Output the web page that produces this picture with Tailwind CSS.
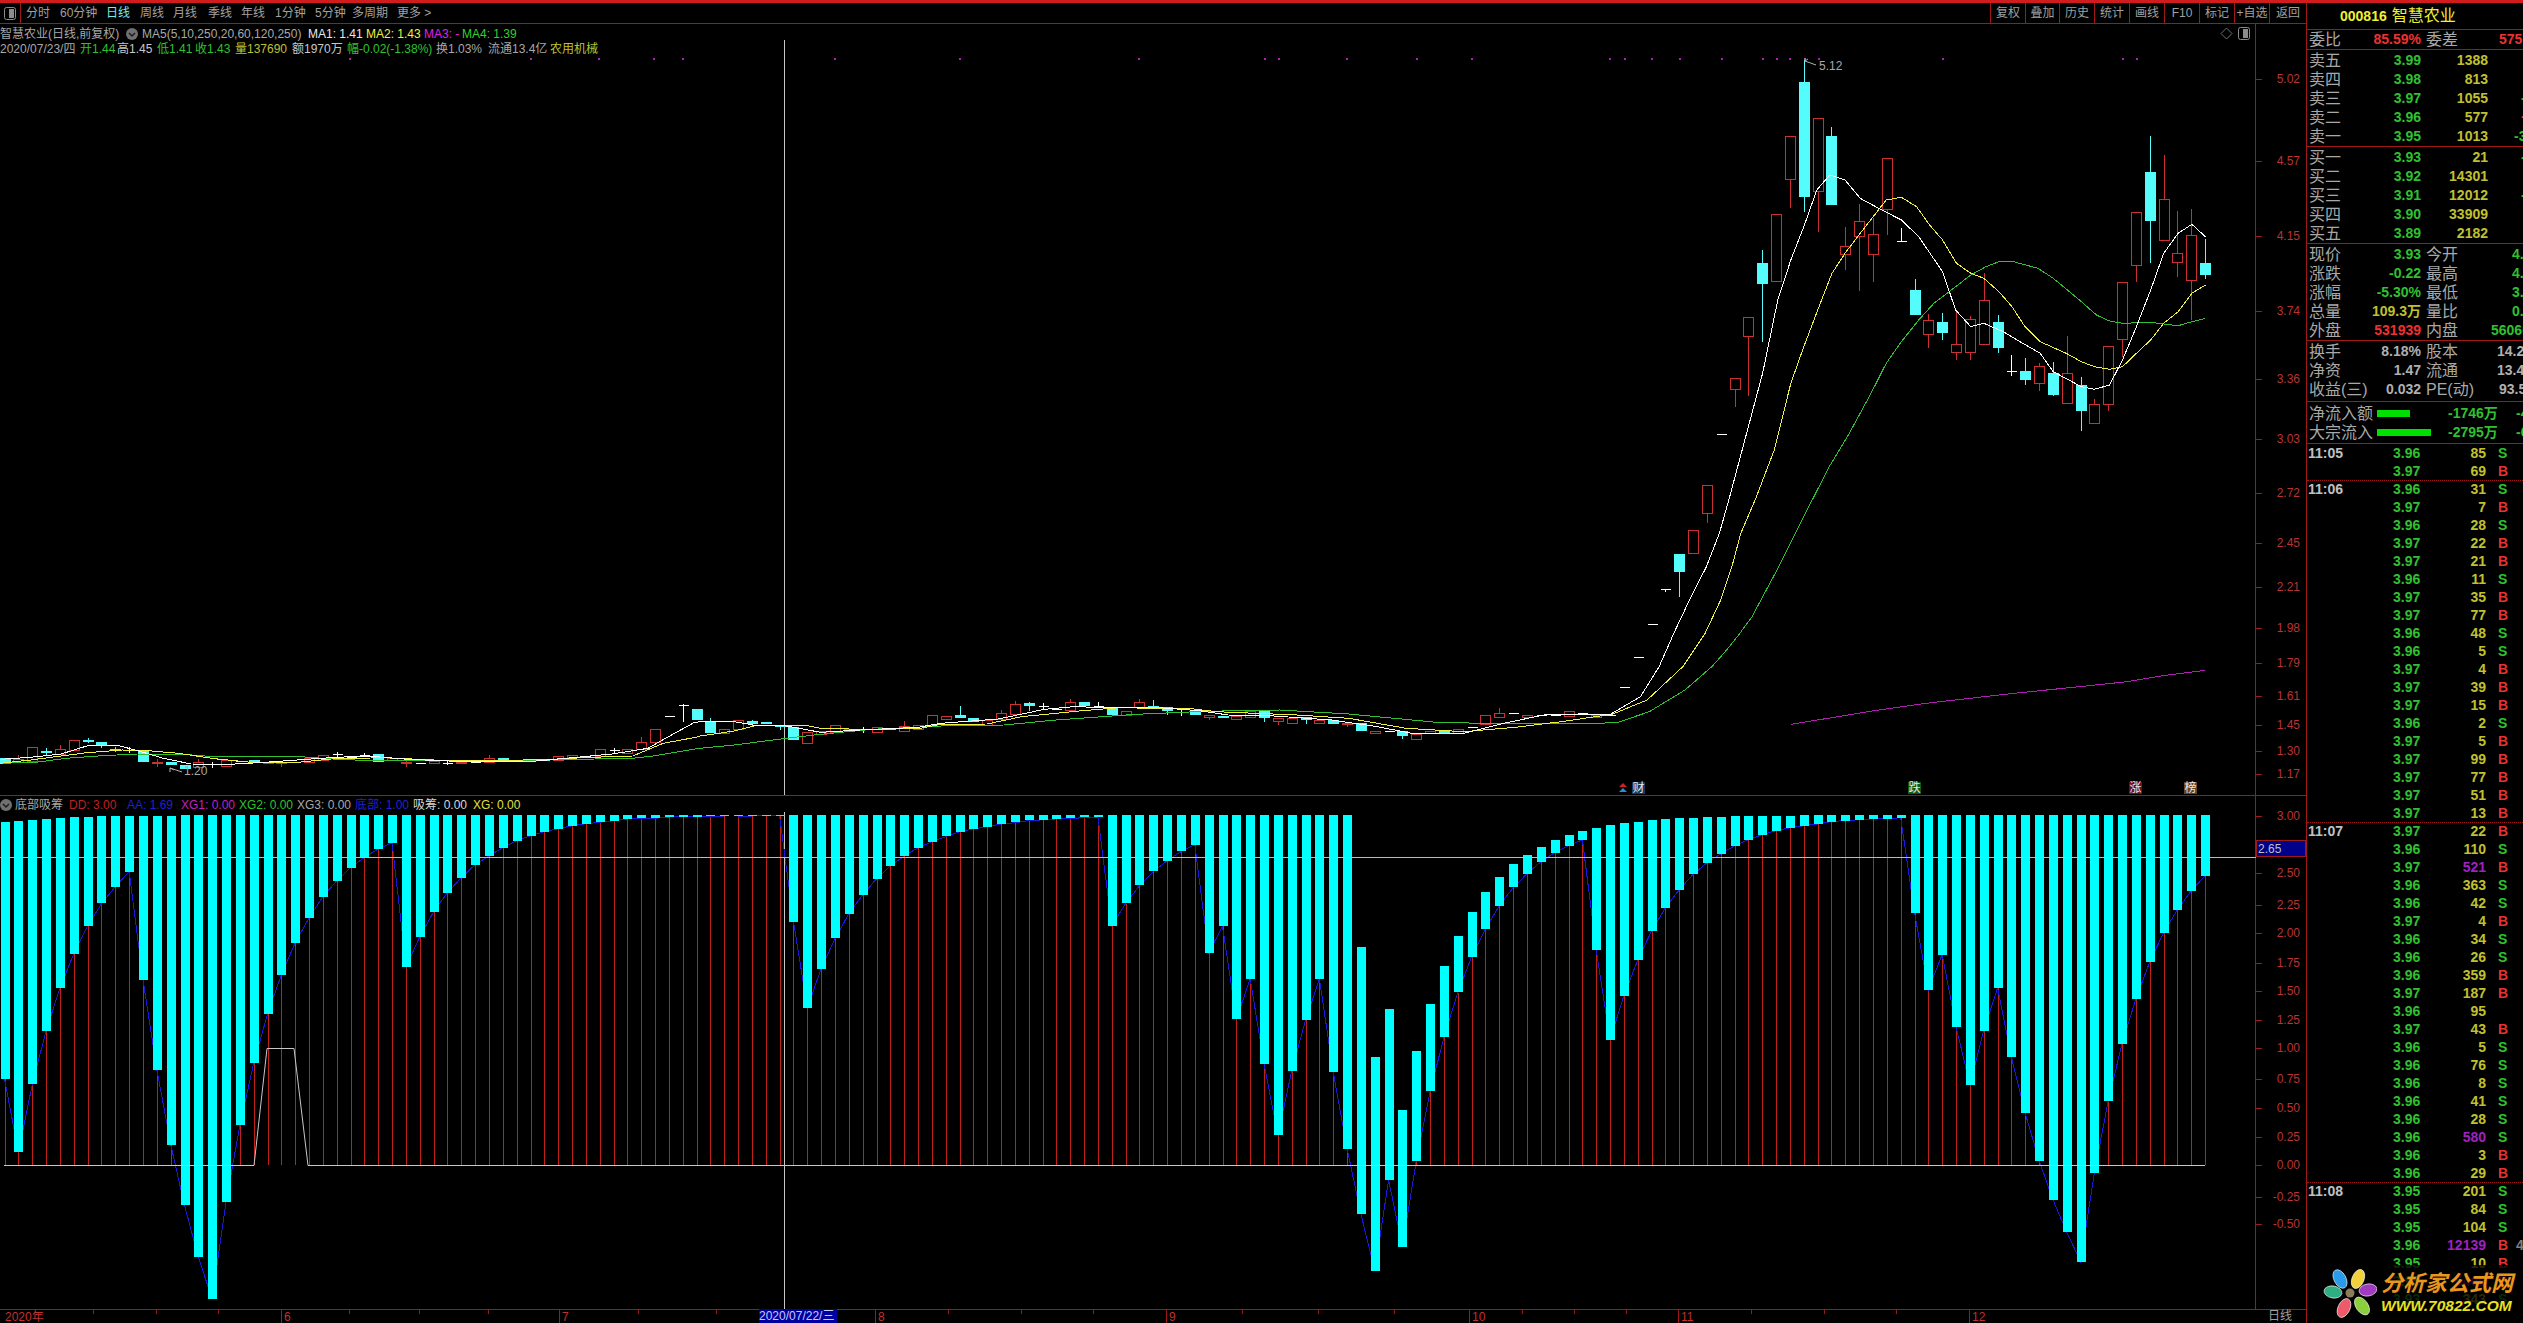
<!DOCTYPE html>
<html lang="zh">
<head>
<meta charset="UTF-8">
<title>000816 智慧农业</title>
<script src="https://cdn.jsdelivr.net/npm/@tailwindcss/browser@4"></script>
</head>
<body class="bg-black">
<div class="w-[2523px] h-[1323px] flex flex-col overflow-hidden bg-black text-[12px] font-['Liberation_Sans','Noto_Sans_CJK_SC',sans-serif] text-[#a8a8a8]">
  <div class="h-[3px] bg-[#d01c1c]"></div>
  <div class="flex-1 flex min-h-0">

    <!-- left: toolbar + charts -->
    <div class="w-[2306px] flex flex-col">
      <div class="h-[21px] flex items-center border-b border-[#a01818] text-[#a0a0a0]">
        <div class="w-[21px] h-full flex items-center justify-center border-r border-[#a01818]">
          <svg width="12" height="13" viewBox="0 0 12 13"><rect x="0.5" y="0.5" width="11" height="12" rx="2" fill="none" stroke="#8c8c8c"/><rect x="5" y="2" width="5" height="9" fill="#8c8c8c"/></svg>
        </div>
        <span class="w-[5px]"></span>
        <span class="w-[34px]">分时</span>
        <span class="w-[46px]">60分钟</span>
        <span class="w-[34px] text-[#7fe8e8]">日线</span>
        <span class="w-[33px]">周线</span>
        <span class="w-[35px]">月线</span>
        <span class="w-[33px]">季线</span>
        <span class="w-[34px]">年线</span>
        <span class="w-[40px]">1分钟</span>
        <span class="w-[37px]">5分钟</span>
        <span class="w-[45px]">多周期</span>
        <span class="w-[40px]">更多 &gt;</span>
        <div class="ml-auto flex h-full">
          <span class="w-[35px] flex items-center justify-center border-l border-[#a01818]">复权</span>
          <span class="w-[34px] flex items-center justify-center border-l border-[#a01818]">叠加</span>
          <span class="w-[35px] flex items-center justify-center border-l border-[#a01818]">历史</span>
          <span class="w-[35px] flex items-center justify-center border-l border-[#a01818]">统计</span>
          <span class="w-[35px] flex items-center justify-center border-l border-[#a01818]">画线</span>
          <span class="w-[35px] flex items-center justify-center border-l border-[#a01818]">F10</span>
          <span class="w-[35px] flex items-center justify-center border-l border-[#a01818]">标记</span>
          <span class="w-[35px] flex items-center justify-center border-l border-[#a01818]">+自选</span>
          <span class="w-[37px] flex items-center justify-center border-l border-[#a01818]">返回</span>
        </div>
      </div>

      <div class="relative flex-1">
        <svg id="chart" class="block" width="2306" height="1299" viewBox="0 24 2306 1299"></svg>

        <!-- main chart caption -->
        <div class="absolute left-0 top-[2px] whitespace-nowrap">
          <div class="flex items-center h-[15px]">
            <span class="w-[125px]">智慧农业(日线,前复权)</span>
            <span class="w-[17px]"><svg width="12" height="12" viewBox="0 0 12 12" class="ml-[1px]"><circle cx="6" cy="6" r="6" fill="#707070"/><path d="M3 5l3 3 3-3" fill="none" stroke="#1c1c1c" stroke-width="1.5"/></svg></span>
            <span class="w-[166px]">MA5(5,10,250,20,60,120,250)</span>
            <span class="w-[58px] text-[#e8e8e8]">MA1: 1.41</span>
            <span class="w-[58px] text-[#f0f040]">MA2: 1.43</span>
            <span class="w-[38px] text-[#e020e0]">MA3: -</span>
            <span class="text-[#30d030]">MA4: 1.39</span>
          </div>
          <div class="flex items-center h-[15px]">
            <span class="w-[80px]">2020/07/23/四</span>
            <span class="w-[37px] text-[#30c030]">开1.44</span>
            <span class="w-[40px] text-[#c8c8c8]">高1.45</span>
            <span class="w-[38px] text-[#30c030]">低1.41</span>
            <span class="w-[40px] text-[#30c030]">收1.43</span>
            <span class="w-[57px] text-[#c0c030]">量137690</span>
            <span class="w-[55px] text-[#c8c8c8]">额1970万</span>
            <span class="w-[89px] text-[#30c030]">幅-0.02(-1.38%)</span>
            <span class="w-[52px]">换1.03%</span>
            <span class="w-[62px]">流通13.4亿</span>
            <span class="text-[#c0c030]">农用机械</span>
          </div>
        </div>

        <!-- top right chart buttons -->
        <div class="absolute left-[2220px] top-[3px] flex items-center gap-[5px]">
          <svg width="13" height="13" viewBox="0 0 13 13"><path d="M6.5 1L12 6.5 6.5 12 1 6.5z" fill="none" stroke="#707070"/></svg>
          <svg width="12" height="13" viewBox="0 0 12 13"><rect x="0.5" y="0.5" width="11" height="12" rx="2" fill="none" stroke="#8c8c8c"/><rect x="5" y="2" width="5" height="9" fill="#8c8c8c"/></svg>
        </div>

        <!-- signal badges -->
        <div class="absolute left-[1632px] top-[758px] w-[13px] h-[12px] flex items-center justify-center bg-[#123a66] text-[#e8e8e8] text-[12px] leading-none">财</div>
        <div class="absolute left-[1908px] top-[758px] w-[13px] h-[12px] flex items-center justify-center bg-[#0e5a12] text-[#e8e8e8] text-[12px] leading-none">跌</div>
        <div class="absolute left-[2129px] top-[758px] w-[13px] h-[12px] flex items-center justify-center bg-[#6a0f14] text-[#e8e8e8] text-[12px] leading-none">涨</div>
        <div class="absolute left-[2184px] top-[758px] w-[13px] h-[12px] flex items-center justify-center bg-[#6a4218] text-[#e8e8e8] text-[12px] leading-none">榜</div>

        <!-- indicator caption -->
        <div class="absolute left-0 top-[772px] h-[17px] flex items-center whitespace-nowrap">
          <span class="w-[15px]"><svg width="12" height="12" viewBox="0 0 12 12"><circle cx="6" cy="6" r="6" fill="#707070"/><path d="M3 5l3 3 3-3" fill="none" stroke="#1c1c1c" stroke-width="1.5"/></svg></span>
          <span class="w-[54px]">底部吸筹</span>
          <span class="w-[58px] text-[#c02020]">DD: 3.00</span>
          <span class="w-[54px] text-[#2020d0]">AA: 1.69</span>
          <span class="w-[58px] text-[#c020c0]">XG1: 0.00</span>
          <span class="w-[58px] text-[#30c030]">XG2: 0.00</span>
          <span class="w-[58px]">XG3: 0.00</span>
          <span class="w-[58px] text-[#2020d0]">底部: 1.00</span>
          <span class="w-[60px] text-[#d8d8d8]">吸筹: 0.00</span>
          <span class="text-[#e0e040]">XG: 0.00</span>
        </div>

        <!-- date tag on the x axis -->
        <div class="absolute left-[759px] top-[1285px] w-[78px] h-[14px] flex items-center bg-[#0000a0] text-[#c8c8f8] whitespace-nowrap leading-none">2020/07/22/三</div>
        <div class="absolute left-[2268px] top-[1286px] text-[#a0a0a0] leading-[13px]">日线</div>
      </div>
    </div>

    <!-- right: quote panel -->
    <div class="relative w-[217px] border-l border-[#a01818] text-[16px] overflow-hidden">
      <div class="h-[27px] pl-[33px] flex items-center gap-[5px] border-b border-[#a01818] text-[#f0f030]">
        <span class="text-[14px] font-bold">000816</span><span>智慧农业</span>
      </div>
      <div class="h-[20px] pl-[2px] flex items-center border-b border-[#a01818] whitespace-nowrap *:shrink-0">
        <div class="w-[112px] flex justify-between items-center"><span>委比</span><span class="text-[14px] font-bold text-[#f03030]">85.59%</span></div>
        <span class="ml-[5px] w-[73px]">委差</span><span class="text-[14px] font-bold text-[#f03030]">57512</span>
      </div>
      <div id="sell" class="h-[97px] pt-[1px] border-b border-[#a01818]"></div>
      <div id="buy" class="h-[97px] pt-[1px] border-b border-[#a01818]"></div>
      <div class="h-[97px] pt-[1px] border-b border-[#a01818]">
        <div class="h-[19px] pl-[2px] flex items-center whitespace-nowrap *:shrink-0">
          <div class="w-[112px] flex justify-between items-center"><span>现价</span><span class="text-[14px] font-bold text-[#30c030]">3.93</span></div>
          <span class="ml-[5px] w-[86px]">今开</span><span class="text-[14px] font-bold text-[#30c030]">4.15</span>
        </div>
        <div class="h-[19px] pl-[2px] flex items-center whitespace-nowrap *:shrink-0">
          <div class="w-[112px] flex justify-between items-center"><span>涨跌</span><span class="text-[14px] font-bold text-[#30c030]">-0.22</span></div>
          <span class="ml-[5px] w-[86px]">最高</span><span class="text-[14px] font-bold text-[#30c030]">4.18</span>
        </div>
        <div class="h-[19px] pl-[2px] flex items-center whitespace-nowrap *:shrink-0">
          <div class="w-[112px] flex justify-between items-center"><span>涨幅</span><span class="text-[14px] font-bold text-[#30c030]">-5.30%</span></div>
          <span class="ml-[5px] w-[86px]">最低</span><span class="text-[14px] font-bold text-[#30c030]">3.90</span>
        </div>
        <div class="h-[19px] pl-[2px] flex items-center whitespace-nowrap *:shrink-0">
          <div class="w-[112px] flex justify-between items-center"><span>总量</span><span class="text-[14px] font-bold text-[#c0c030]">109.3万</span></div>
          <span class="ml-[5px] w-[86px]">量比</span><span class="text-[14px] font-bold text-[#30c030]">0.85</span>
        </div>
        <div class="h-[19px] pl-[2px] flex items-center whitespace-nowrap *:shrink-0">
          <div class="w-[112px] flex justify-between items-center"><span>外盘</span><span class="text-[14px] font-bold text-[#f03030]">531939</span></div>
          <span class="ml-[5px] w-[65px]">内盘</span><span class="text-[14px] font-bold text-[#30c030]">560601</span>
        </div>
      </div>
      <div class="h-[61px] pt-[1px] border-b border-[#a01818]">
        <div class="h-[19px] pl-[2px] flex items-center whitespace-nowrap *:shrink-0">
          <div class="w-[112px] flex justify-between items-center"><span>换手</span><span class="text-[14px] font-bold text-[#b0b0b0]">8.18%</span></div>
          <span class="ml-[5px] w-[71px]">股本</span><span class="text-[14px] font-bold text-[#b0b0b0]">14.27亿</span>
        </div>
        <div class="h-[19px] pl-[2px] flex items-center whitespace-nowrap *:shrink-0">
          <div class="w-[112px] flex justify-between items-center"><span>净资</span><span class="text-[14px] font-bold text-[#b0b0b0]">1.47</span></div>
          <span class="ml-[5px] w-[71px]">流通</span><span class="text-[14px] font-bold text-[#b0b0b0]">13.41亿</span>
        </div>
        <div class="h-[19px] pl-[2px] flex items-center whitespace-nowrap *:shrink-0">
          <div class="w-[112px] flex justify-between items-center"><span>收益(三)</span><span class="text-[14px] font-bold text-[#b0b0b0]">0.032</span></div>
          <span class="ml-[5px] w-[73px]">PE(动)</span><span class="text-[14px] font-bold text-[#b0b0b0]">93.5</span>
        </div>
      </div>
      <div class="h-[42px] pt-[2px] border-b border-[#a01818]">
        <div class="h-[19px] pl-[2px] flex items-center whitespace-nowrap *:shrink-0">
          <span class="w-[68px]">净流入额</span>
          <span class="w-[71px]"><span class="block w-[33px] h-[7px] bg-[#00e000]"></span></span>
          <span class="w-[68px] text-[14px] font-bold text-[#30c030]">-1746万</span>
          <span class="text-[14px] font-bold text-[#30c030]">-4</span>
        </div>
        <div class="h-[19px] pl-[2px] flex items-center whitespace-nowrap *:shrink-0">
          <span class="w-[68px]">大宗流入</span>
          <span class="w-[71px]"><span class="block w-[54px] h-[7px] bg-[#00e000]"></span></span>
          <span class="w-[68px] text-[14px] font-bold text-[#30c030]">-2795万</span>
          <span class="text-[14px] font-bold text-[#30c030]">-6</span>
        </div>
      </div>
      <div id="ticks"></div>

      <!-- site watermark -->
      <div class="absolute right-0 bottom-0 w-[200px] h-[58px] bg-black/80 flex items-start">
        <svg class="mt-[2px] shrink-0" width="54" height="52" viewBox="-27 -26 54 52">
          <g stroke="#ffffff" stroke-width="0.6">
            <ellipse cx="-10" cy="-14" rx="6" ry="10" fill="#2a9be8" transform="rotate(-28 -10 -14)"/>
            <ellipse cx="8" cy="-14" rx="6" ry="10" fill="#f2d23c" transform="rotate(22 8 -14)"/>
            <ellipse cx="18" cy="-3" rx="6" ry="9" fill="#a03cc0" transform="rotate(80 18 -3)"/>
            <ellipse cx="12" cy="13" rx="6" ry="10" fill="#8ccf3c" transform="rotate(-35 12 13)"/>
            <ellipse cx="-6" cy="15" rx="6" ry="10" fill="#ee5a6a" transform="rotate(25 -6 15)"/>
            <ellipse cx="-17" cy="-1" rx="6" ry="9" fill="#2fae82" transform="rotate(-80 -17 -1)"/>
          </g>
          <circle r="4.5" fill="#8c7c58"/>
        </svg>
        <div class="ml-[4px] flex flex-col italic font-bold whitespace-nowrap">
          <span class="text-[22px] leading-[24px] mt-[7px] text-[#e8961e]">分析家公式网</span>
          <span class="text-[15.5px] leading-[16px] mt-[2px] text-[#e8e020]">WWW.70822.COM</span>
        </div>
      </div>
    </div>
  </div>
</div>

<script>
// bars share one x grid with the candles
const X = i => 4.6 + 13.84 * (i - 1);

// indicator bars: a number is the bottom edge, a pair is [top, bottom]
const barSegs = [
  { y0: 800, k: 3, top: 45, rows: [[66,838],[63,1057],[60,853],[57,692],[54,564],[51,461],[50,378],[49,311],[48,260],[47,215],[47,539],[47,808],[47,1033],1216,1372,1498,1207,976,790,641,524,428,353,290,242,203,172,147,128,500,410,335,278,233,194,168,143,122,107,95,86,77,71,67,62,57,55,55,51,50,50,49,48,48,48,47,47,365] },
  { y0: 790, k: 2.94, top: 74, rows: [640,526,437,364,308,261,223,194,170,152,137,123,114,108,100,96,90,88,85,84,81,81,399,334,281,240,208,181,161,479,400,673,555,805,1014,826,676,555,829,1055,[462,1246],[785,1414],[644,1146],[941,1343],[768,1090],[630,887],[518,726],[430,596],[359,490],[300,408],[256,340],[218,287],[191,246],[168,211],[147,184],[132,164],[121,146],[112,470]] },
  { y0: 780, k: 2.888, top: 101, rows: [[130,750],[124,623],[121,520],[116,436],[113,369],[110,317],[110,273],[107,239],[107,213],[104,190],[104,172],[104,158],[104,146],[104,138],132,127,120,117,115,112,112,109,383,605,504,712,880,724,600,800,963,1099,1212,1306,1391,1134,926,761,631,525,441,374,320,276] }
];
const bars = [];
barSegs.forEach(s => s.rows.forEach(r => {
  const [t, b] = Array.isArray(r) ? r : [s.top, r];
  bars.push({ top: s.y0 + t / s.k, bot: s.y0 + b / s.k });
}));

// candles: [type, top, bottom, high, low]. c = filled cyan, r = hollow red, w = white doji
const candleSegs = [
  { y0: 680, first: 1, rows: [['c',235,248],['r',237,247,225,250],['r',202,243],['c',212,219,205,225],['r',208,221,195],['r',181,209],['c',180,186,175,190],['c',187,195,187,205],['c',206,211,200,215],['w',209,209,200,220],['c',212,245],['r',246,250,238,260],['c',247,255],['c',255,267],['r',247,262,237],['w',251,251,245,265],['r',241,257],['w',243,243],['c',241,247],['r',246,250],['r',246,250,246,260],['w',245,245],['r',235,245],['r',224,240],['w',222,222,215,235],['w',231,231],['w',226,226,220,232],['c',223,245],['r',235,240],['r',246,250,240,260],['w',249,249],['r',243,248],['w',248,248,240,255],['r',247,250],['w',245,245],['r',235,247,225],['c',234,241],['w',240,240],['w',240,240],['c',238,243],['r',229,240],['r',224,232],['w',230,230],['r',208,228],['w',210,210,205,220],['r',208,220],['r',187,208,172],['r',148,185],['w',108,108],['w',76,76,72,125],['c',87,121],['c',123,158,115],['r',148,160],['r',120,148],['c',124,132,120,140],['c',125,133],['c',135,140,135,150],['c',142,180]] },
  { y0: 670, first: 59, rows: [['r',185,218],['r',182,192],['r',165,185],['r',178,184],['w',177,177,170,190],['r',170,186],['c',173,178],['r',167,182,153],['r',165,178],['r',135,165],['r',139,147],['c',135,144,108],['c',144,156],['r',150,165],['r',130,148,120],['r',103,132,93],['c',100,107,96,122],['w',108,108,100,117],['w',116,116],['r',97,120,88],['c',97,108],['w',108,108,97],['c',110,135],['r',122,135],['r',97,112,87],['c',108,114,90],['c',112,122,112,135],['w',115,115,115,138],['c',125,135],['r',135,142,135,150],['c',138,143],['r',138,147],['r',122,140],['c',120,144,120,155],['r',144,152,144,165],['r',145,158],['c',142,150,142,162],['r',150,159],['c',151,161],['r',158,163,158,170],['c',160,183],['r',183,190],['w',184,184],['c',184,198,184,208],['r',193,206],['r',183,188],['c',183,190],['r',178,188],['w',172,172],['r',135,163],['r',129,142,115],['w',129,129],['r',135,141],['w',135,135],['w',135,135]] },
  { y0: 400, first: 114, rows: [['r',933,947],['w',940,940],['r',945,950],['w',945,945],['w',861,861],['w',772,772],['w',673,673],['w',567,567,567,575],['c',462,516,462,590],['r',390,458],['r',256,338,256,368],['w',103,103]] },
  { y0: 50, first: 126, rows: [['r',985,1018,985,1070],['r',802,857,802,1037],['c',640,702,600,876],['r',493,694],['r',259,386,259,473],['c',96,440,30,485],['r',205,422,205,545],['c',258,465,231],['r',588,611,530,660],['r',514,557,462,722],['r',553,611,505,695],['r',325,476,325,555],['w',574,574,535],['c',720,795,687],['r',811,851,793,893],['c',816,849,790,869],['r',883,905,785,929],['r',808,905,798,929],['r',751,881,670],['c',816,893,796,908],['w',964,964,915,977],['c',964,990,925,1004],['r',949,998,940,1023],['c',970,1035,937,1038],['r',970,1058,858,1063],['c',1005,1082,980,1142],['r',1063,1118,1047],['r',889,1063,889,1082],['r',697,866,697,922],['r',487,644,487,695],['c',366,513,258,640],['r',448,569,315],['r',609,635,483,682],['r',556,689,477,810],['c',640,675,567,687]] }
];

// moving averages, read off four stretches of the chart
const pts = (x0, kx, y0, list) => list.map(([x, y]) => [x0 + x / kx, y0 + y / 3]);
const A = l => pts(0, 1.96, 680, l), B = l => pts(700, 1.742, 670, l), C = l => pts(1560, 2.24, 400, l), D = l => pts(1600, 2.306, 50, l);
const maWhite = [...A([[0,238],[60,232],[120,222],[170,198],[230,196],[270,212],[320,235],[375,252],[450,253],[520,247],[600,238],[660,232],[720,228],[800,238],[880,243],[950,243],[1050,243],[1130,232],[1200,222],[1270,205],[1310,170],[1360,128]]),
  ...B([[0,155],[60,155],[100,167],[150,168],[210,187],[280,180],[380,172],[420,160],[520,147],[600,118],[650,110],[720,113],[800,113],[870,122],[920,135],[1000,138],[1100,150],[1180,170],[1240,190],[1330,190],[1400,160],[1470,135],[1560,133]]),
  ...C([[113,943],[180,890],[222,800],[255,700],[290,600],[328,500],[357,400],[378,300],[400,190]]),
  ...D([[375,970],[410,750],[440,630],[470,530],[500,420],[530,375],[565,390],[600,445],[650,480],[695,510],[735,560],[790,665],[820,780],[855,830],[885,820],[930,845],[975,880],[1015,910],[1045,965],[1110,1010],[1140,1018],[1175,1005],[1205,930],[1237,830],[1270,720],[1300,610],[1333,550],[1365,523],[1396,560]])];
const maYellow = [...A([[0,250],[60,240],[120,228],[170,218],[240,210],[290,212],[350,220],[420,236],[500,248],[590,246],[650,237],[750,233],[850,240],[950,243],[1080,238],[1160,232],[1240,228],[1300,190],[1370,170]]),
  ...B([[0,198],[60,183],[100,165],[180,165],[210,175],[280,178],[380,176],[420,163],[500,162],[560,140],[660,123],[730,113],[860,117],[900,125],[1040,135],[1130,145],[1230,175],[1330,185],[1420,172],[1500,155],[1568,138]]),
  ...C([[113,945],[195,900],[275,800],[325,700],[360,600],[385,500],[405,400],[437,300]]),
  ...D([[402,1200],[440,1000],[470,890],[505,770],[535,670],[565,610],[600,550],[630,500],[660,450],[695,442],[730,470],[760,525],[790,570],[822,640],[855,670],[885,685],[920,725],[950,770],[980,830],[1015,875],[1075,910],[1110,935],[1140,950],[1175,958],[1205,950],[1237,910],[1270,870],[1300,820],[1333,785],[1365,730],[1396,705]])];
const maGreen = [...A([[0,250],[70,247],[130,235],[200,227],[270,222],[350,222],[420,230],[590,230],[660,238],[730,242],[820,242],[950,243],[1060,240],[1240,235],[1280,228],[1370,205]]),
  ...B([[0,235],[60,225],[150,205],[210,193],[300,178],[420,168],[530,165],[620,150],[760,133],[880,124],[1010,120],[1130,132],[1290,158],[1500,162],[1568,160]]),
  ...C([[130,967],[200,935],[280,870],[340,800],[370,755],[400,705],[430,650],[450,600],[490,500],[527,400],[565,300],[603,200],[648,100]]),
  ...D([[625,1030],[660,940],[695,875],[735,810],[770,760],[805,725],[855,675],[890,650],[920,635],[950,634],[1010,655],[1045,685],[1078,720],[1110,755],[1145,795],[1172,812],[1205,820],[1270,817],[1333,827],[1365,815],[1396,805]])];
const maPurple = C([[517,973],[600,955],[700,933],[820,910],[950,890],[1030,878],[1150,862],[1270,845],[1350,827],[1445,811]]);

const priceAxis = [[5.02,79],[4.57,161],[4.15,236],[3.74,311],[3.36,379],[3.03,439],[2.72,493],[2.45,543],[2.21,587],[1.98,628],[1.79,663],[1.61,696],[1.45,725],[1.30,751],[1.17,774],
  [3.00,816],[2.50,873],[2.25,905],[2.00,933],[1.75,963],[1.50,991],[1.25,1020],[1.00,1048],[0.75,1079],[0.50,1108],[0.25,1137],[0.00,1165],[-0.25,1197],[-0.50,1224]];
const dots = [349,530,598,653,682,834,959,1138,1264,1278,1346,1416,1471,1609,1624,1651,1679,1721,1762,1776,1789,1804,1818,1942,2122,2136];
const months = [[281,'6'],[559,'7'],[875,'8'],[1166,'9'],[1469,'10'],[1678,'11'],[1969,'12']];
const minorTicks = [93,156,218,349,419,488,638,716,948,1021,1093,1242,1318,1394,1522,1574,1626,1751,1824,1896];

const RED = '#a01818', CYAN = '#00ffff', SOFT_CYAN = '#55fcfc', CANDLE_RED = '#cc3030';
let out = '';
const line = (x1, y1, x2, y2, c) => out += `<line x1="${x1}" y1="${y1}" x2="${x2}" y2="${y2}" stroke="${c}" shape-rendering="crispEdges"/>`;
const rect = (x, y, w, h, fill, stroke) => out += `<rect x="${x}" y="${y}" width="${w}" height="${h}" fill="${fill}" stroke="${stroke || 'none'}" shape-rendering="crispEdges"/>`;
const poly = (p, c) => out += `<polyline points="${p.map(q => q[0].toFixed(1) + ',' + q[1].toFixed(1)).join(' ')}" fill="none" stroke="${c}" stroke-width="1" shape-rendering="crispEdges"/>`;
const text = (x, y, s, c, anchor) => out += `<text x="${x}" y="${y}" fill="${c}" font-size="12" text-anchor="${anchor || 'start'}">${s}</text>`;

// frame
line(0, 795.5, 2306, 795.5, RED);
line(0, 1309.5, 2306, 1309.5, RED);
line(2255.5, 24, 2255.5, 1309, RED);

dots.forEach(x => rect(x, 58, 2, 2, '#b020b0'));

// crosshair
line(784.5, 40, 784.5, 795, '#c8c8c8');
line(784.5, 812, 784.5, 1309, '#c8c8c8');

// candles
candleSegs.forEach(seg => seg.rows.forEach((r, n) => {
  const y = v => Math.round(seg.y0 + v / 3);
  const cx = Math.round(X(seg.first + n)) + 0.5;
  const [type, top, bot, high = top, low = bot] = r;
  if (type === 'w') {
    line(cx - 5, y(top) + 0.5, cx + 5, y(top) + 0.5, '#ffffff');
    if (high !== low) line(cx, y(high), cx, y(low), '#ffffff');
  } else if (type === 'c') {
    line(cx, y(high), cx, y(low), SOFT_CYAN);
    rect(cx - 5.5, y(top), 11, Math.max(y(bot) - y(top), 2), SOFT_CYAN);
  } else {
    line(cx, y(high), cx, y(low), CANDLE_RED);
    rect(cx - 5, y(top) + 0.5, 10, Math.max(y(bot) - y(top), 1), '#000000', CANDLE_RED);
  }
}));

poly(maGreen, '#30c030');
poly(maYellow, '#f0f040');
poly(maWhite, '#ffffff');
poly(maPurple, '#b020b0');

// extreme price tags
out += `<path d="M1805 61v-3M1805 61l3-2M1805 61l11 4" fill="none" stroke="#b0b0b0"/>`;
text(1819, 70, '5.12', '#a8a8a8');
out += `<path d="M170 768v4M170 768l4 2M170 768l12 4" fill="none" stroke="#b0b0b0"/>`;
text(184, 775, '1.20', '#a8a8a8');

// little up-arrows next to the 财 badge
out += `<path d="M1623 783l4 4h-8z" fill="#d02020"/><path d="M1623 788l4 4h-8z" fill="#2a8ae0"/>`;

// indicator panel
const baseY = 1165;
bars.forEach((b, n) => {
  const cx = Math.round(X(n + 1)) + 0.5;
  if (b.bot < baseY) line(cx, Math.round(b.bot), cx, baseY, '#c02018');
});
poly(bars.map((b, n) => [X(n + 1), b.bot]), '#1818d8');
bars.forEach((b, n) => rect(Math.round(X(n + 1)) - 4, Math.round(b.top), 9, Math.round(b.bot - b.top), CYAN));
out += `<polyline points="4,1165.5 254,1165.5 267,1048.5 294,1048.5 308,1165.5 2205,1165.5" fill="none" stroke="#c8c8c8"/>`;
line(0, 857, 2256, 857, '#bcbcbc');

// price axis
priceAxis.forEach(([v, y]) => {
  line(2256, y, 2262, y, RED);
  text(2300, y + 4, v.toFixed(2), '#b83434', 'end');
});
rect(2256.5, 840.5, 49, 16, '#00008b', RED);
text(2258, 853, '2.65', '#c0c0c0');

// date axis
text(5, 1321, '2020年', '#c03030');
months.forEach(([x, s]) => { line(x + 0.5, 1310, x + 0.5, 1323, RED); text(x + 3, 1321, s, '#c03030'); });
minorTicks.forEach(x => line(x + 0.5, 1310, x + 0.5, 1314, RED));

document.getElementById('chart').innerHTML = out;

// order book
const bookRow = (label, price, qty, extra, extraCls) => `
  <div class="h-[19px] pl-[2px] flex items-center whitespace-nowrap *:shrink-0">
    <div class="w-[112px] flex justify-between items-center"><span>${label}</span><span class="text-[14px] font-bold text-[#30c030]">${price}</span></div>
    <span class="w-[67px] text-right text-[14px] font-bold text-[#c0c030]">${qty}</span>
    <span class="${extraCls} text-[14px] font-bold">${extra}</span>
  </div>`;
document.getElementById('sell').innerHTML = [
  ['卖五','3.99','1388','',''],['卖四','3.98','813','',''],['卖三','3.97','1055','-','ml-[33px] text-[#30c030]'],
  ['卖二','3.96','577','+','ml-[33px] text-[#f03030]'],['卖一','3.95','1013','-3','ml-[26px] text-[#30c030]']
].map(r => bookRow(...r)).join('');
document.getElementById('buy').innerHTML = [
  ['买一','3.93','21','-','ml-[33px] text-[#30c030]'],['买二','3.92','14301','',''],['买三','3.91','12012','-','ml-[33px] text-[#30c030]'],
  ['买四','3.90','33909','',''],['买五','3.89','2182','','']
].map(r => bookRow(...r)).join('');

// tick list: [time, price, qty, side, purple, minute separator above]
const ticks = [['11:05','3.96','85','S'],['','3.97','69','B'],['11:06','3.96','31','S',0,1],['','3.97','7','B'],['','3.96','28','S'],['','3.97','22','B'],['','3.97','21','B'],['','3.96','11','S'],['','3.97','35','B'],['','3.97','77','B'],['','3.96','48','S'],['','3.96','5','S'],['','3.97','4','B'],['','3.97','39','B'],['','3.97','15','B'],['','3.96','2','S'],['','3.97','5','B'],['','3.97','99','B'],['','3.97','77','B'],['','3.97','51','B'],['','3.97','13','B'],
  ['11:07','3.97','22','B',0,1],['','3.96','110','S'],['','3.97','521','B',1],['','3.96','363','S'],['','3.96','42','S'],['','3.97','4','B'],['','3.96','34','S'],['','3.96','26','S'],['','3.96','359','B'],['','3.97','187','B'],['','3.96','95',''],['','3.97','43','B'],['','3.96','5','S'],['','3.96','76','S'],['','3.96','8','S'],['','3.96','41','S'],['','3.96','28','S'],['','3.96','580','S',1],['','3.96','3','B'],['','3.96','29','B'],
  ['11:08','3.95','201','S',0,1],['','3.95','84','S'],['','3.95','104','S'],['','3.96','12139','B',1],['','3.95','10','B'],['','3.95','5406','B',1],['','3.93','343','S']];
document.getElementById('ticks').innerHTML = ticks.map(([t, p, q, s, big, sep], n) => `
  <div class="h-[18px] pl-[1px] flex items-center whitespace-nowrap text-[14px] font-bold *:shrink-0 ${sep ? 'border-t border-dotted border-[#a01818]' : ''}">
    <span class="w-[85px] text-[#c0c0c0]">${t}</span>
    <span class="w-[26px] text-[#30c030]">${p}</span>
    <span class="w-[67px] text-right ${big ? 'text-[#a020c0]' : 'text-[#c0c030]'}">${q}</span>
    <span class="w-[18px] ml-[12px] ${s === 'S' ? 'text-[#30c030]' : 'text-[#e83030]'}">${s}</span>
    ${n === 44 ? '<span class="text-[#808080]">4</span>' : ''}
  </div>`).join('');
</script>
</body>
</html>
